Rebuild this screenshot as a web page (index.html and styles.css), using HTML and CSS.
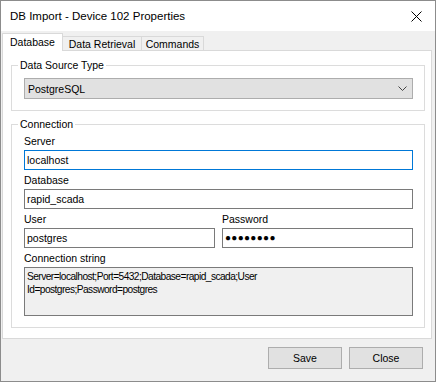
FILE: index.html
```html
<!DOCTYPE html>
<html>
<head>
<meta charset="utf-8">
<link rel="stylesheet" href="styles.css">
</head>
<body>
<div class="window">
  <div class="titlebar">
    <span class="title">DB Import - Device 102 Properties</span>
    <svg class="close" width="11" height="11" viewBox="0 0 11 11"><path d="M0.5 0.5 L10.5 10.5 M10.5 0.5 L0.5 10.5" stroke="#000" stroke-width="1" fill="none"/></svg>
  </div>
  <div class="tabs">
    <div class="tab active t1">Database</div>
    <div class="tab t2">Data Retrieval</div>
    <div class="tab t3">Commands</div>
  </div>
  <div class="page">
    <fieldset class="group g1">
      <legend>Data Source Type</legend>
      <div class="combo"><span>PostgreSQL</span>
        <svg width="9" height="6" viewBox="0 0 9 6"><path d="M0.5 0.5 L4.5 4.5 L8.5 0.5" stroke="#444" stroke-width="1" fill="none"/></svg>
      </div>
    </fieldset>
    <fieldset class="group g2">
      <legend>Connection</legend>
      <div class="lbl">Server</div>
      <div class="input focus">localhost</div>
      <div class="lbl">Database</div>
      <div class="input">rapid_scada</div>
      <div class="pair">
        <div>
          <div class="lbl">User</div>
          <div class="input">postgres</div>
        </div>
        <div>
          <div class="lbl">Password</div>
          <div class="input dots">●●●●●●●●</div>
        </div>
      </div>
      <div class="lbl">Connection string</div>
      <div class="textarea">Server=localhost;Port=5432;Database=rapid_scada;User<br>Id=postgres;Password=postgres</div>
    </fieldset>
  </div>
  <div class="buttons">
    <div class="btn">Save</div>
    <div class="btn">Close</div>
  </div>
</div>
</body>
</html>
```
FILE: styles.css
```css
* { box-sizing: border-box; }
html, body { margin: 0; padding: 0; }
body {
  font-family: "Liberation Sans", Arial, sans-serif;
  font-size: 10.5px;
  color: #000;
  background: #fff;
}
.window {
  width: 436px;
  height: 382px;
  border: 1px solid #8c8c8c;
  background: #f0f0f0;
  display: flex;
  flex-direction: column;
}
.titlebar {
  height: 30px;
  background: #fff;
  display: flex;
  align-items: center;
  justify-content: space-between;
  padding: 0 13px 0 9px;
}
.title { font-size: 11.5px; }
.close { display: block; }
.tabs {
  height: 19px;
  display: flex;
  align-items: flex-end;
  padding-left: 1px;
  position: relative;
  z-index: 1;
}
.tab {
  height: 14px;
  border: 1px solid #d9d9d9;
  border-bottom: none;
  border-left: none;
  background: #f0f0f0;
  display: flex;
  align-items: center;
  justify-content: center;
  line-height: 13px;
  padding-top: 1px;
}
.tab.active {
  height: 18px;
  border-left: 1px solid #d9d9d9;
  background: #fff;
  margin-bottom: -1px;
  padding-top: 0;
}
.t1 { width: 61px; }
.t2 { width: 79px; }
.t3 { width: 62px; }
.page {
  margin: 0 3px 0 1px;
  height: 289px;
  background: #fff;
  border: 1px solid #d9d9d9;
  padding: 8px 6px 0 8px;
}
.group {
  margin: 0;
  border: 1px solid #dcdcdc;
  padding: 6px 11px 11px 12px;
  min-width: 0;
}
.group legend {
  padding: 0 2px;
  margin-left: -6px;
  line-height: 13px;
}
.g2 { margin-top: 7px; padding-top: 0; }
.combo {
  height: 21px;
  background: #e1e1e1;
  border: 1px solid #adadad;
  display: flex;
  align-items: center;
  justify-content: space-between;
  padding: 0 5px 0 3px;
}
.combo svg { display: block; margin-top: 1px; }
.lbl {
  height: 19px;
  padding-top: 4px;
  line-height: 13px;
}
.input {
  height: 20px;
  border: 1px solid #7a7a7a;
  background: #fff;
  padding: 0 2px;
  line-height: 18px;
}
.input.focus { border-color: #0078d7; }
.dots { font-size: 10px; letter-spacing: 0.3px; }
.pair {
  display: grid;
  grid-template-columns: 191px 191px;
  column-gap: 7px;
}
.textarea {
  height: 49px;
  border: 1px solid #7a7a7a;
  background: #f0f0f0;
  padding: 2px 2px;
  font-size: 10.2px;
  line-height: 13px;
  letter-spacing: -0.55px;
}
.buttons {
  display: flex;
  justify-content: flex-end;
  gap: 7px;
  padding: 8px 12px 0 0;
}
.btn {
  width: 74px;
  height: 22px;
  background: #e1e1e1;
  border: 1px solid #adadad;
  display: flex;
  align-items: center;
  justify-content: center;
}
```
